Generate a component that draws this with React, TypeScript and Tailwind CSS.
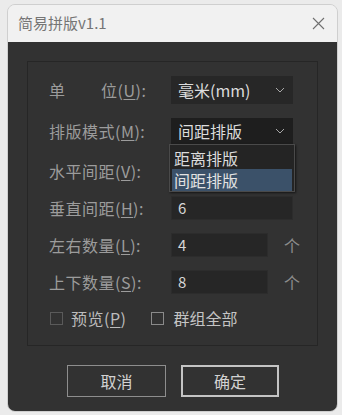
import React from "react";

const font = { fontFamily: '"Noto Sans CJK SC", "Noto Sans", sans-serif' };

function Chevron() {
  return (
    <svg width="10" height="6" viewBox="0 0 10 6" className="text-[#a8a8a8]">
      <path d="M1 1l4 4 4-4" fill="none" stroke="currentColor" strokeWidth="1" />
    </svg>
  );
}

function Label({ text, k }: { text: string; k: string }) {
  return (
    <div className="w-[122px] shrink-0 text-[16px] text-[#9c9c9c] tracking-[0.5px]">
      {text}(<span className="underline underline-offset-2">{k}</span>):
    </div>
  );
}

function Row({ children, className }: { children: React.ReactNode; className?: string }) {
  return <div className={"flex items-center pl-[21px] " + (className ?? "")}>{children}</div>;
}

export default function App() {
  return (
    <div className="w-[342px] h-[415px] bg-[#ebebeb] pt-[4px] pl-[7px]" style={font}>
      <div className="w-[331px] h-[408px] rounded-[8px] overflow-hidden border border-[#cfcfcf] flex flex-col">
        <div className="h-[37px] bg-[#f1f1f1] flex items-center justify-between pl-[10px] pr-[12px]">
          <span className="text-[15px] text-[#757575]">简易拼版v1.1</span>
          <svg width="13" height="13" viewBox="0 0 13 13" className="text-[#707070]">
            <path d="M1 1l11 11M12 1L1 12" stroke="currentColor" strokeWidth="1.1" />
          </svg>
        </div>
        <div className="flex-1 bg-[#323232] pt-[19px] px-[19px]">
          <div className="h-[285px] border border-[#262626] pt-[14px]">
            <Row className="h-[28px]">
              <div className="w-[122px] shrink-0 text-[16px] text-[#9c9c9c] flex">
                <span>单</span>
                <span className="ml-[36px] tracking-[0.5px]">
                  位(<span className="underline underline-offset-2">U</span>):
                </span>
              </div>
              <div className="w-[122px] h-[28px] bg-[#272727] flex items-center justify-between pl-[7px] pr-[8px]">
                <span className="text-[16px] text-[#dcdcdc]">毫米(mm)</span>
                <Chevron />
              </div>
            </Row>
            <Row className="h-[26px] mt-[14px]">
              <Label text="排版模式" k="M" />
              <div className="relative">
                <div className="w-[122px] h-[26px] bg-[#1e1e1e] flex items-center justify-between pl-[7px] pr-[8px]">
                  <span className="text-[16px] text-[#dcdcdc]">间距排版</span>
                  <Chevron />
                </div>
                <div className="absolute left-[-2px] top-[26px] w-[126px] h-[48px] bg-[#242424] border border-[#4a4a4a] shadow-[1px_1px_2px_rgba(0,0,0,0.6)] z-10 flex flex-col pt-[1px] px-[2px]">
                  <div className="h-[23px] flex items-center pl-[2px] text-[16px] text-[#dcdcdc]">距离排版</div>
                  <div className="h-[22px] flex items-center pl-[2px] bg-[#3b5169] text-[16px] text-[#e2e2e2]">间距排版</div>
                </div>
              </div>
            </Row>
            <Row className="h-[24px] mt-[15px]">
              <Label text="水平间距" k="V" />
              <div className="w-[122px] h-[24px] bg-[#262626]" />
            </Row>
            <Row className="h-[24px] mt-[13px]">
              <Label text="垂直间距" k="H" />
              <div className="w-[122px] h-[24px] bg-[#262626] border border-[#2c2c2c] flex items-center pl-[6px] text-[15px] text-[#d6d6d6]">6</div>
            </Row>
            <Row className="h-[24px] mt-[13px]">
              <Label text="左右数量" k="L" />
              <div className="w-[97px] h-[24px] bg-[#262626] border border-[#2c2c2c] flex items-center pl-[6px] text-[15px] text-[#d6d6d6]">4</div>
              <span className="ml-[16px] text-[16px] text-[#8c8c8c]">个</span>
            </Row>
            <Row className="h-[24px] mt-[13px]">
              <Label text="上下数量" k="S" />
              <div className="w-[97px] h-[24px] bg-[#262626] border border-[#2c2c2c] flex items-center pl-[6px] text-[15px] text-[#d6d6d6]">8</div>
              <span className="ml-[16px] text-[16px] text-[#8c8c8c]">个</span>
            </Row>
            <Row className="h-[24px] mt-[12px]">
              <div className="w-[13px] h-[13px] border border-[#5a5a5a] ml-[1px]" />
              <span className="ml-[8px] text-[16px] text-[#bcbcbc] tracking-[0.5px]">
                预览(<span className="underline underline-offset-2">P</span>)
              </span>
              <div className="w-[13px] h-[13px] border border-[#8a8a8a] ml-[25px]" />
              <span className="ml-[9px] text-[16px] text-[#c4c4c4]">群组全部</span>
            </Row>
          </div>
          <div className="flex pl-[40px] gap-[15px] mt-[19px]">
            <button className="w-[99px] h-[32px] border border-[#8e8e8e] text-[16px] text-[#d2d2d2]">取消</button>
            <button className="w-[98px] h-[32px] border-2 border-[#c4c4c4] text-[16px] text-[#d2d2d2]">确定</button>
          </div>
        </div>
      </div>
    </div>
  );
}
